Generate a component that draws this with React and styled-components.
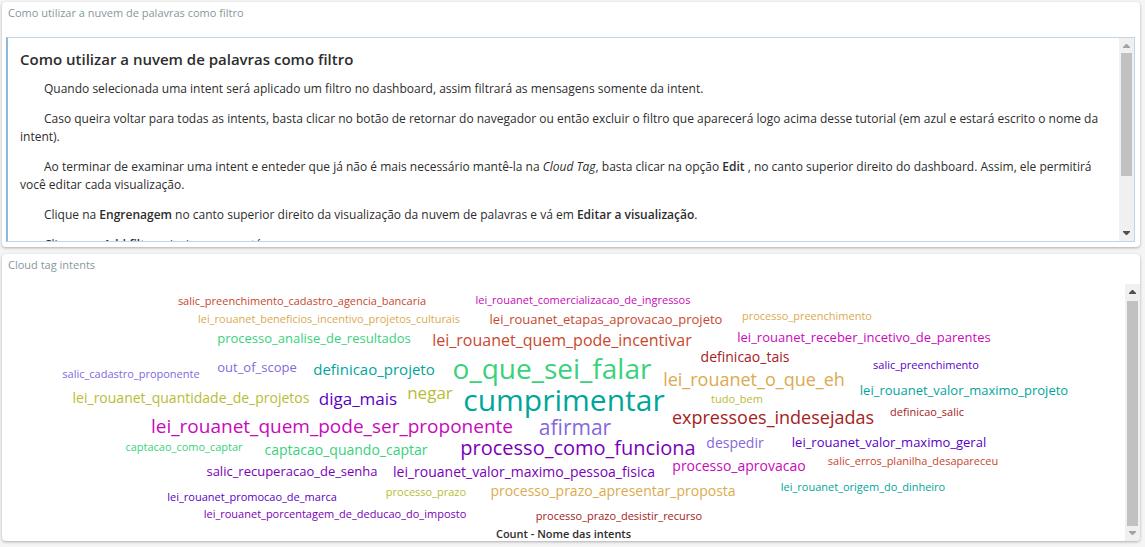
import React from "react";
import styled, { createGlobalStyle } from "styled-components";

const GlobalStyle = createGlobalStyle`
  * { box-sizing: border-box; }
  body {
    margin: 0;
    background: #f5f5f5;
    color: #2d2d2d;
    font-family: "Open Sans", "Noto Sans", sans-serif;
    font-size: 12px;
    line-height: 18px;
  }
`;

const Dashboard = styled.main`
  display: flex;
  flex-direction: column;
  gap: 7px;
  padding: 2px 5px 5px 2px;
`;

const Panel = styled.section`
  display: flex;
  flex-direction: column;
  overflow: hidden;
  background: #fff;
  border-radius: 4px;
  box-shadow: 0 1px 3px rgba(0, 0, 0, 0.3);
`;

const PanelTitle = styled.h2`
  margin: 0;
  padding: 2px 6px 10px;
  color: #87979c;
  font-size: 11px;
  font-weight: 400;
  line-height: 18px;
`;

const PanelBody = styled.div`
  display: flex;
  height: 257px;
`;

const MarkdownBody = styled.div`
  display: flex;
  height: 205px;
  margin: 5px 5px 5px 4px;
  border: 1px solid #bfd6e9;
  border-left: 2px solid #8fb9db;
`;

const Markdown = styled.article`
  flex: 1;
  min-width: 0;
  overflow: hidden;
  padding: 11px 12px;
`;

const Heading = styled.h1`
  margin: 0 0 11px;
  font-size: 15px;
  font-weight: 600;
  line-height: 20px;
`;

const Paragraph = styled.p`
  margin: 0 0 12px;
  text-indent: 24px;

  strong { font-weight: 600; }
`;

const Track = styled.div`
  display: flex;
  flex: none;
  flex-direction: column;
  align-items: center;
  width: 15px;
  background: #f0f0f0;
`;

const Arrow = styled.svg`
  flex: none;
  width: 15px;
  height: 15px;
  fill: ${(p) => (p.$active ? "#505050" : "#a3a3a3")};
`;

const Rail = styled.div`
  display: flex;
  flex: 1;
  flex-direction: column;
  justify-content: ${(p) => (p.$end ? "flex-end" : "flex-start")};
  width: 11px;
`;

const Thumb = styled.div`
  height: ${(p) => p.$size};
  background: #c1c1c1;
`;

const CloudBody = styled.figure`
  display: flex;
  flex: 1;
  flex-direction: column;
  min-width: 0;
  margin: 0;
`;

const Cloud = styled.svg`
  width: 100%;
  height: 242px;
`;

const Word = styled.text`
  fill: ${(p) => p.$color};
  font-size: ${(p) => p.$size}px;
  text-anchor: middle;
`;

const Caption = styled.figcaption`
  font-size: 11px;
  font-weight: 600;
  line-height: 15px;
  text-align: center;
`;

const green = "#38d27c";
const teal = "#00a69b";
const magenta = "#c80ab8";
const purple = "#7a00b8";
const indigo = "#5a00c4";
const violet = "#8468dc";
const gold = "#dcaa50";
const olive = "#b9bc35";
const brick = "#c8472e";
const red = "#a52222";

const words = [
  ["salic_preenchimento_cadastro_agencia_bancaria", 300, 21, 11, brick],
  ["lei_rouanet_comercializacao_de_ingressos", 581, 20, 11, magenta],
  ["lei_rouanet_beneficios_incentivo_projetos_culturais", 327, 39, 11, gold],
  ["lei_rouanet_etapas_aprovacao_projeto", 604, 40, 13, brick],
  ["processo_preenchimento", 805, 36, 11, gold],
  ["processo_analise_de_resultados", 312, 59, 13, green],
  ["lei_rouanet_quem_pode_incentivar", 560, 62, 16, brick],
  ["lei_rouanet_receber_incetivo_de_parentes", 862, 58, 13, magenta],
  ["definicao_tais", 743, 78, 14, red],
  ["salic_preenchimento", 924, 85, 11, indigo],
  ["salic_cadastro_proponente", 129, 94, 11, violet],
  ["out_of_scope", 255, 88, 13, violet],
  ["definicao_projeto", 372, 91, 15, teal],
  ["o_que_sei_falar", 550, 95, 28, green],
  ["lei_rouanet_o_que_eh", 752, 102, 18, gold],
  ["lei_rouanet_valor_maximo_projeto", 962, 111, 13, teal],
  ["lei_rouanet_quantidade_de_projetos", 189, 119, 14, olive],
  ["diga_mais", 356, 121, 17, indigo],
  ["negar", 428, 115, 17, olive],
  ["cumprimentar", 562, 127, 30, teal],
  ["tudo_bem", 735, 119, 11, olive],
  ["definicao_salic", 925, 132, 11, red],
  ["expressoes_indesejadas", 771, 140, 18, red],
  ["lei_rouanet_quem_pode_ser_proponente", 330, 149, 19, magenta],
  ["afirmar", 573, 151, 21, violet],
  ["captacao_como_captar", 182, 167, 11, green],
  ["captacao_quando_captar", 344, 171, 14, green],
  ["processo_como_funciona", 576, 171, 20, purple],
  ["despedir", 733, 164, 14, violet],
  ["lei_rouanet_valor_maximo_geral", 887, 163, 13, indigo],
  ["salic_recuperacao_de_senha", 290, 192, 13, purple],
  ["lei_rouanet_valor_maximo_pessoa_fisica", 522, 193, 14, purple],
  ["processo_aprovacao", 737, 187, 14, magenta],
  ["salic_erros_planilha_desapareceu", 911, 181, 11, brick],
  ["lei_rouanet_promocao_de_marca", 250, 217, 11, indigo],
  ["processo_prazo", 424, 212, 11, olive],
  ["processo_prazo_apresentar_proposta", 611, 212, 14, gold],
  ["lei_rouanet_origem_do_dinheiro", 861, 207, 11, teal],
  ["lei_rouanet_porcentagem_de_deducao_do_imposto", 333, 234, 11, purple],
  ["processo_prazo_desistir_recurso", 617, 236, 11, red],
];

function Scrollbar({ size, end = false }) {
  return (
    <Track aria-hidden="true">
      <Arrow $active={end} viewBox="0 0 15 15"><path d="M4 10v-1l3-3h1l3 3v1z" /></Arrow>
      <Rail $end={end}><Thumb $size={size} /></Rail>
      <Arrow $active={!end} viewBox="0 0 15 15"><path d="M4 5v1l3 3h1l3-3v-1z" /></Arrow>
    </Track>
  );
}

export default function App() {
  return (
    <>
      <GlobalStyle />
      <Dashboard>
        <Panel>
          <PanelTitle>Como utilizar a nuvem de palavras como filtro</PanelTitle>
          <MarkdownBody>
            <Markdown>
              <Heading>Como utilizar a nuvem de palavras como filtro</Heading>
              <Paragraph>
                Quando selecionada uma intent será aplicado um filtro no dashboard, assim filtrará as mensagens somente da intent.
              </Paragraph>
              <Paragraph>
                Caso queira voltar para todas as intents, basta clicar no botão de retornar do navegador ou então excluir o filtro que aparecerá logo acima desse tutorial (em azul e estará escrito o nome da intent).
              </Paragraph>
              <Paragraph>
                Ao terminar de examinar uma intent e enteder que já não é mais necessário mantê-la na <em>Cloud Tag</em>, basta clicar na opção <strong>Edit</strong> , no canto superior direito do dashboard. Assim, ele permitirá você editar cada visualização.
              </Paragraph>
              <Paragraph>
                Clique na <strong>Engrenagem</strong> no canto superior direito da visualização da nuvem de palavras e vá em <strong>Editar a visualização</strong>.
              </Paragraph>
              <Paragraph>
                Clique em <strong>Add filter</strong> e insira como está:
              </Paragraph>
            </Markdown>
            <Scrollbar size="71%" />
          </MarkdownBody>
        </Panel>
        <Panel>
          <PanelTitle>Cloud tag intents</PanelTitle>
          <PanelBody>
            <CloudBody>
              <Cloud viewBox="0 0 1123 242">
                {words.map(([label, x, y, size, color]) => (
                  <Word key={label} x={x} y={y} $size={size} $color={color}>{label}</Word>
                ))}
              </Cloud>
              <Caption>Count - Nome das intents</Caption>
            </CloudBody>
            <Scrollbar size="99%" end />
          </PanelBody>
        </Panel>
      </Dashboard>
    </>
  );
}
